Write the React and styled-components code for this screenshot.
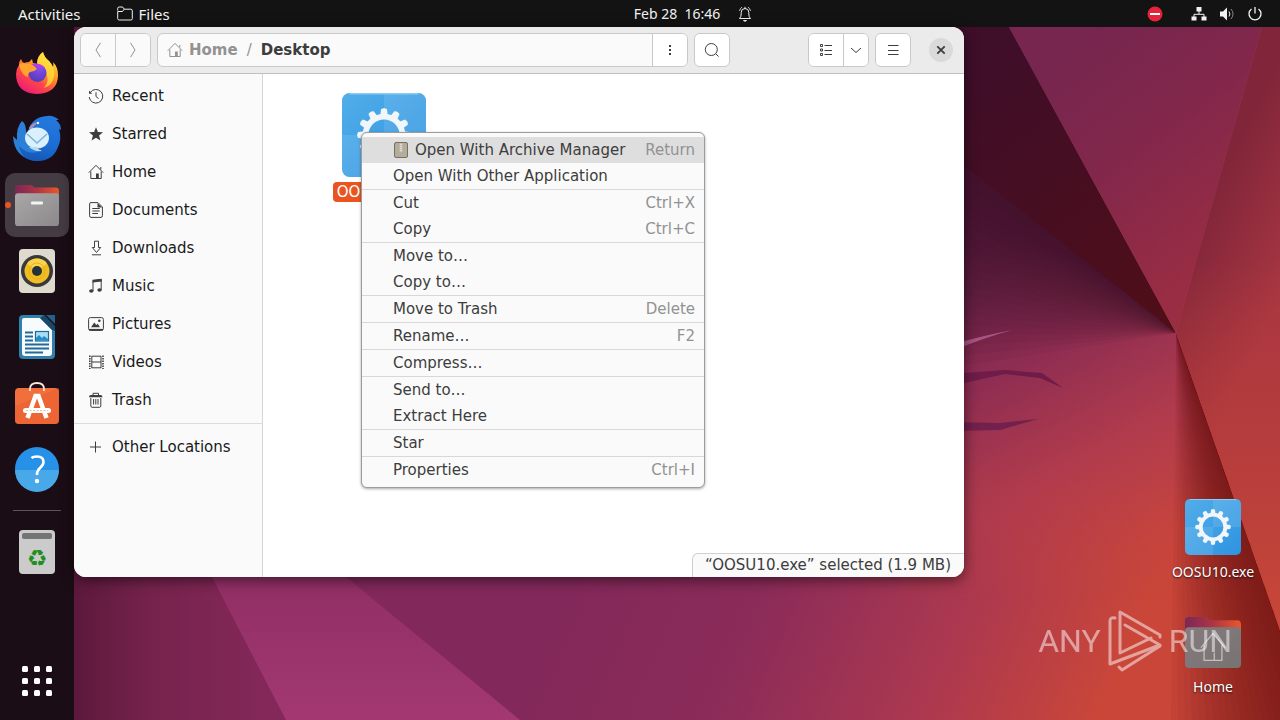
import React from "react";

import styled, { createGlobalStyle, css } from "styled-components";

const GlobalStyle = createGlobalStyle`
    * {
        box-sizing: border-box;
    }

    body {
        margin: 0;
        background: #7a2450;
        font-family: "DejaVu Sans", sans-serif;
        font-size: 15px;
    }

    button {
        margin: 0;
        padding: 0;
        border: 0;
        background: none;
        color: inherit;
        font: inherit;
        cursor: default;
    }

    svg {
        display: block;
        flex: none;
    }
`;

const Screen = styled.div`
    position: relative;
    display: flex;
    flex-direction: column;
    min-height: 100vh;
    overflow: hidden;
`;

const WallpaperSvg = styled.svg`
    position: absolute;
    inset: 0;
    width: 100%;
    height: 100%;
`;

/* top bar */

const TopBar = styled.header`
    position: relative;
    display: grid;
    grid-template-columns: 1fr auto 1fr;
    align-items: center;
    height: 27px;
    padding: 0 17px 0 18px;
    background: #131313;
    color: #f2f2f2;
    font-family: "Noto Sans", sans-serif;
    font-size: 14px;
    line-height: 20px;
`;

const BarGroup = styled.div`
    display: flex;
    align-items: center;
    gap: ${(props) => props.$gap || 0}px;
    justify-content: ${(props) => (props.$end ? "flex-end" : "flex-start")};
    font-size: 15px;
`;

const BarButton = styled.button`
    display: flex;
    align-items: center;
    gap: 6px;
    white-space: pre;
`;

const ClockButton = styled(BarButton)`
    gap: 17px;
    margin-left: 106px;
`;

const RecordButton = styled(BarButton)`
    margin-right: 16px;
`;

/* dock */

const Workspace = styled.div`
    position: relative;
    display: flex;
    flex: 1;
`;

const Dock = styled.nav`
    display: flex;
    flex-direction: column;
    align-items: center;
    gap: 2px;
    width: 74px;
    padding: 14px 5px 7px;
    background: rgba(20, 12, 18, 0.9);
`;

const DockItem = styled.button`
    position: relative;
    display: grid;
    place-items: center;
    width: 64px;
    height: 64px;
    border-radius: 10px;

    ${(props) =>
        props.$active &&
        css`
            background: #453c43;

            &::before {
                content: "";
                position: absolute;
                left: 0;
                top: 29px;
                width: 6px;
                height: 6px;
                border-radius: 50%;
                background: #e95420;
            }
        `}
`;

const DockLine = styled.hr`
    width: 48px;
    height: 1px;
    margin: 7px 0;
    border: 0;
    background: #5c545a;
`;

const DockSpacer = styled.div`
    flex: 1;
`;

/* window */

const Desktop = styled.main`
    position: relative;
    flex: 1;
`;

const Window = styled.section`
    position: absolute;
    top: 0;
    left: 0;
    display: flex;
    flex-direction: column;
    width: calc(100% - 316px);
    height: calc(100% - 143px);
    border-radius: 12px;
    background: #fff;
    box-shadow: 0 3px 14px rgba(0, 0, 0, 0.55);
`;

const HeaderBar = styled.div`
    display: flex;
    align-items: center;
    gap: 6px;
    height: 47px;
    padding: 0 11px 0 6px;
    border-bottom: 1px solid #bfbfbf;
    border-radius: 12px 12px 0 0;
    background: #ebebeb;
    color: #3d3d3d;
`;

const Linked = styled.div`
    display: flex;
    flex: ${(props) => (props.$grow ? 1 : "none")};
    height: 34px;
    margin-right: ${(props) => (props.$wide ? 72 : 0)}px;
    border: 1px solid #c9c9c9;
    border-radius: 6px;
    background: ${(props) => (props.$flat ? "#fafafa" : "#fff")};
    overflow: hidden;

    > * + button {
        border-left: 1px solid #c9c9c9;
    }
`;

const ToolButton = styled.button`
    display: grid;
    place-items: center;
    box-sizing: content-box;
    width: ${(props) => (props.$narrow ? 24 : 34)}px;
    color: ${(props) => (props.disabled ? "#929292" : "#3d3d3d")};
    background: ${(props) => (props.disabled ? "#fafafa" : "#fff")};
`;

const PathBar = styled.div`
    display: flex;
    flex: 1;
    align-items: center;
    gap: 9px;
    padding-left: 9px;
    color: #929292;
    font-weight: bold;
`;

const PathButton = styled.button`
    display: flex;
    align-items: center;
    gap: 6px;
    color: ${(props) => (props.$current ? "#3d3d3d" : "#929292")};
`;

const Slash = styled.span`
    font-weight: normal;
`;

const CloseButton = styled.button`
    display: grid;
    place-items: center;
    width: 24px;
    height: 24px;
    margin-left: 12px;
    border-radius: 50%;
    background: #dadada;
`;

const WindowBody = styled.div`
    display: flex;
    flex: 1;
`;

const Sidebar = styled.nav`
    width: 189px;
    padding-top: 3px;
    border-right: 1px solid #d6d6d6;
    border-bottom-left-radius: 12px;
    background: #fafafa;
`;

const Place = styled.button`
    display: flex;
    align-items: center;
    gap: 8px;
    width: 100%;
    height: 38px;
    padding-left: 14px;
    color: #1a1a1a;

    svg {
        color: #3d3d3d;
    }
`;

const SidebarLine = styled.hr`
    height: 1px;
    margin: 4px 0;
    border: 0;
    background: #dcdcdc;
`;

const Content = styled.div`
    display: flex;
    flex: 1;
    flex-direction: column;
    align-items: flex-start;
    justify-content: space-between;
    padding: 19px 0 0 71px;
`;

const FileTile = styled.button`
    display: flex;
    flex-direction: column;
    align-items: center;
    gap: 5px;
    width: 100px;
`;

const FileName = styled.span`
    padding: 0 4px;
    border-radius: 4px;
    background: #e95420;
    color: #fff;
    line-height: 20px;
`;

const StatusBar = styled.div`
    align-self: flex-end;
    height: 24px;
    padding: 0 13px 0 12px;
    border: 1px solid #d0d0d0;
    border-width: 1px 0 0 1px;
    border-radius: 6px 0 12px 0;
    background: #fafafa;
    color: #3d3d3d;
    line-height: 22px;
`;

/* context menu */

const Menu = styled.div`
    position: absolute;
    top: 105px;
    left: 287px;
    width: 344px;
    padding: 4px 0;
    border: 1px solid #9c9c9c;
    border-radius: 6px;
    background: #fafafa;
    box-shadow: 0 1px 3px rgba(0, 0, 0, 0.35);
`;

const MenuItem = styled.button`
    display: flex;
    align-items: center;
    gap: 6px;
    width: 100%;
    height: 26px;
    padding: 0 9px 0 31px;
    background: ${(props) => (props.$active ? "#dedede" : "none")};
    color: #3d3d3d;
`;

const Shortcut = styled.span`
    margin-left: auto;
    color: #929292;
`;

const MenuLine = styled.hr`
    height: 1px;
    margin: 0;
    border: 0;
    background: #d8d8d8;
`;

/* desktop icons and the watermark */

const DesktopIcons = styled.div`
    position: absolute;
    right: 17px;
    bottom: 23px;
    display: flex;
    flex-direction: column;
    gap: 32px;
    width: 100px;
`;

const DesktopIcon = styled.button`
    display: flex;
    flex-direction: column;
    align-items: center;
    gap: 7px;
    color: #fff;
    font-family: "Noto Sans", sans-serif;
    font-size: 14px;
    line-height: 20px;
    text-shadow: 0 1px 2px rgba(0, 0, 0, 0.7);
`;

const IconBox = styled.span`
    display: grid;
    place-items: center;
    height: 56px;
`;

const Watermark = styled.div`
    position: absolute;
    right: 48px;
    bottom: 48px;
    display: flex;
    align-items: center;
    gap: 6px;
    color: #fff;
    font-family: "Liberation Sans Narrow", Roboto, sans-serif;
    font-size: 32px;
    line-height: 62px;
    opacity: 0.5;
    pointer-events: none;
`;

const foldSteps = Array.from({ length: 20 }, (_, i) => i + 1);

function Wallpaper() {
    return (
        <WallpaperSvg viewBox="0 0 1280 720" preserveAspectRatio="none" aria-hidden="true">
            <defs>
                <linearGradient id="wBase" gradientUnits="userSpaceOnUse" x1="620" y1="420" x2="1130" y2="640">
                    <stop offset="0" stopColor="#82285a" />
                    <stop offset="0.35" stopColor="#8a2b59" />
                    <stop offset="0.7" stopColor="#ab3850" />
                    <stop offset="1" stopColor="#c94639" />
                </linearGradient>
                <linearGradient id="wMid" gradientUnits="userSpaceOnUse" x1="960" y1="260" x2="1120" y2="560">
                    <stop offset="0" stopColor="#6f234f" />
                    <stop offset="0.35" stopColor="#8e2d52" />
                    <stop offset="0.7" stopColor="#b23c4c" />
                    <stop offset="1" stopColor="#c4443f" />
                </linearGradient>
                <linearGradient id="wMidFade" gradientUnits="userSpaceOnUse" x1="0" y1="480" x2="0" y2="600">
                    <stop offset="0" stopColor="#fff" />
                    <stop offset="1" stopColor="#000" />
                </linearGradient>
                <mask id="wMidMask">
                    <rect width="1280" height="720" fill="url(#wMidFade)" />
                </mask>
                <linearGradient id="wWedge" gradientUnits="userSpaceOnUse" x1="980" y1="60" x2="1176" y2="333">
                    <stop offset="0" stopColor="#3f0e29" />
                    <stop offset="1" stopColor="#500e17" />
                </linearGradient>
                <linearGradient id="wTop" gradientUnits="userSpaceOnUse" x1="1050" y1="60" x2="1210" y2="270">
                    <stop offset="0" stopColor="#76264f" />
                    <stop offset="0.45" stopColor="#82274b" />
                    <stop offset="1" stopColor="#992d43" />
                </linearGradient>
                <linearGradient id="wRight" gradientUnits="userSpaceOnUse" x1="1200" y1="210" x2="1300" y2="260">
                    <stop offset="0" stopColor="#80253a" />
                    <stop offset="1" stopColor="#a83641" />
                </linearGradient>
                <linearGradient id="wRightLow" gradientUnits="userSpaceOnUse" x1="0" y1="260" x2="0" y2="620">
                    <stop offset="0" stopColor="#c04038" stopOpacity="0" />
                    <stop offset="1" stopColor="#c74738" />
                </linearGradient>
                <linearGradient id="wCorner" gradientUnits="userSpaceOnUse" x1="74" y1="0" x2="270" y2="0">
                    <stop offset="0" stopColor="#5c193b" />
                    <stop offset="0.4" stopColor="#76234d" />
                    <stop offset="1" stopColor="#842859" />
                </linearGradient>
                <linearGradient id="wLight" x1="0" y1="0" x2="0" y2="1">
                    <stop offset="0" stopColor="#902f64" />
                    <stop offset="1" stopColor="#a33873" />
                </linearGradient>
            </defs>
            <rect width="1280" height="720" fill="url(#wBase)" />
            <rect x="0" y="0" width="290" height="720" fill="url(#wCorner)" />
            <path d="M212 577 L286 720 H520 L346 577 Z" fill="url(#wLight)" />
            <path d="M900 100 L1176 333 L1280 628 L1280 720 H900 Z" fill="url(#wMid)" mask="url(#wMidMask)" />
            {/* soft folds that run out from the corner point */}
            {foldSteps.map((step) => (
                <path key={step} d={`M900 100 L1176 333 L900 ${115 + step * 13} Z`} fill="#300c24" opacity="0.055" />
            ))}
            {foldSteps.map((step) => (
                <path key={step} d={`M1176 333 L${1311 - step * 7} 720 H1311 Z`} fill="#6e1215" opacity="0.06" />
            ))}
            <path d="M900 27 H1009 L1176 333 L967 168 L900 115 Z" fill="url(#wWedge)" />
            <path d="M1009 27 H1262 L1176 333 Z" fill="url(#wTop)" />
            <path d="M1262 27 H1280 V628 L1176 333 Z" fill="url(#wRight)" />
            <path d="M1262 27 H1280 V628 L1176 333 Z" fill="url(#wRightLow)" />
            <path d="M950 345 Q985 335 1013 330 Q985 337 950 352 Z" fill="#a65683" />
            <path d="M950 374 L1005 370 L1042 373 L1063 388 L1040 378 L1005 374 L950 386 Z" fill="#6f1c4a" />
            <path d="M950 422 L1000 423 L1038 419 L1000 430 L950 431 Z" fill="#72204d" />
        </WallpaperSvg>
    );
}

/* 16px symbolic icons, drawn with the current colour */
const glyphs = {
    folder: (
        <path d="M.7 4.5 V2.5 Q.7 1 2.2 1 H5 Q6 1 6.5 2 L7.2 3.2 H13.8 Q15.3 3.2 15.3 4.7 V12.5 Q15.3 14 13.8 14 H2.2 Q.7 14 .7 12.5 V5.5 H5.5 L7.2 3.2" />
    ),
    bell: (
        <>
            <path d="M2.5 12.5 Q4.2 11 4.2 8 V6.5 Q4.2 2.5 8 2.5 T11.8 6.5 V8 Q11.8 11 13.5 12.5 Z M8 .8 V2.5" />
            <path d="M2.5 5 Q3 2.5 5 1 M13.5 5 Q13 2.5 11 1" strokeWidth="0.8" />
            <path d="M6 14 H10 Q9.5 15.8 8 15.8 T6 14 Z" fill="currentColor" stroke="none" />
        </>
    ),
    network: (
        <>
            <path d="M8 5 V8 M3 11 V8.3 H13 V11" />
            <path d="M5.5 1 H10.5 V5.5 H5.5 Z M.5 10.5 H5.5 V14.5 H.5 Z M10.5 10.5 H15.5 V14.5 H10.5 Z" fill="currentColor" stroke="none" />
        </>
    ),
    volume: (
        <>
            <path d="M1 5.5 H4 L8 1.5 V14.5 L4 10.5 H1 Z" fill="currentColor" stroke="none" />
            <path d="M10 5.5 Q11.8 8 10 10.5" />
            <path d="M12 3 Q16 8 12 13" opacity="0.5" />
        </>
    ),
    power: <path d="M8 1 V7.5 M4.5 3 A6 6 0 1 0 11.5 3" strokeWidth="1.3" />,
    back: <path d="M10.5 .8 L6 8 L10.5 15.2" />,
    forward: <path d="M5.5 .8 L10 8 L5.5 15.2" />,
    home: (
        <>
            <path d="M.8 8.7 L8 1.3 L15.2 8.7 M2.8 7.5 V14.5 H13.2 V7.5 M12.8 3 V5.5" />
            <path d="M8 9.5 H10.8 V14.5 H8 Z" fill="currentColor" stroke="none" />
        </>
    ),
    recent: (
        <>
            <path d="M2.3 4.5 A6.8 6.8 0 1 1 1.2 9 M8 4.3 V8.5 L10.5 10.5" />
            <path d="M1 2.5 V5.7 H4.2 Z" fill="currentColor" stroke="none" />
        </>
    ),
    star: (
        <path d="M8 1.3 L9.9 6 L15 6.3 L11.1 9.5 L12.4 14.4 L8 11.7 L3.6 14.4 L4.9 9.5 L1 6.3 L6.1 6 Z" fill="currentColor" stroke="none" />
    ),
    document: (
        <>
            <path d="M1.6 1.9 Q1.6 .6 3 .6 H10 L14.4 5 V13.8 Q14.4 15.4 13 15.4 H3 Q1.6 15.4 1.6 13.8 Z M4.3 6.5 H11.7 M4.3 9 H11.7 M4.3 11.5 H10" />
            <path d="M9.5 1 V5.5 H14 Z" fill="currentColor" stroke="none" />
        </>
    ),
    download: <path d="M6.5 1.2 H10.5 V7.5 H12.7 L8.5 12.5 L4.3 7.5 H6.5 Z M4 14.8 H13" />,
    music: (
        <>
            <path d="M5 13 V2.8 L13.2 1.5 V12" />
            <path d="M4.5 1.8 L13.7 .8 V3.5 L4.5 4.5 Z" fill="currentColor" stroke="none" />
            <ellipse cx="3.3" cy="13" rx="2.2" ry="1.8" fill="currentColor" stroke="none" />
            <ellipse cx="11.5" cy="12" rx="2.2" ry="1.8" fill="currentColor" stroke="none" />
        </>
    ),
    picture: (
        <>
            <rect x=".6" y="1.600" width="14.800" height="12.800" rx="1.800" />
            <path d="M1 13.7 H15" strokeWidth="1.6" />
            <path d="M3 11.3 L6.3 6.5 L8.3 9 L9.8 7.8 L12 11.3 Z" fill="currentColor" stroke="none" />
            <circle cx="11.3" cy="4.8" r="1.3" fill="currentColor" stroke="none" />
        </>
    ),
    video: (
        <>
            <path d="M3.8 2 V14 M13 2 V14 M3.8 2.2 H13 M3.8 8 H13 M3.8 13.8 H13" />
            <path d="M1.8 1.5 V15 M15 1.5 V15" strokeWidth="1.6" strokeDasharray="1.5 1" />
        </>
    ),
    trash: (
        <>
            <path d="M5 3 V1.3 H10.5 V3 M2.8 6 V13.8 Q2.8 15.3 4.2 15.3 H11.5 Q12.8 15.3 12.8 13.8 V6 M5.6 7 V12.5 M7.8 7 V12.5 M10 7 V12.5" />
            <path d="M1 5.3 Q1 3 3 3 H12.5 Q14.5 3 14.5 5.3 Z" fill="currentColor" stroke="none" />
        </>
    ),
    plus: <path d="M7.5 2.5 V13.5 M2 8 H13" />,
    dots: <path d="M7 3 H9 V5 H7 Z M7 7 H9 V9 H7 Z M7 11 H9 V13 H7 Z" fill="currentColor" stroke="none" />,
    search: <path d="M13.3 7.5 A6 6 0 1 1 1.3 7.5 A6 6 0 1 1 13.3 7.5 M11.7 11.7 L14.6 14.6" />,
    list: <path d="M2.5 2.5 H4.5 V4.5 H2.5 Z M2.5 7 H4.5 V9 H2.5 Z M2.5 11.5 H4.5 V13.5 H2.5 Z M6.5 3.5 H14 M6.5 8.5 H14 M6.5 12.5 H14" />,
    down: <path d="M3 6 L8 10.5 L13 6" />,
    burger: <path d="M3 3.5 H13.5 M3 8.5 H13.5 M3 12.5 H13.5" />,
    close: <path d="M4.3 4.3 L11.7 11.7 M11.7 4.3 L4.3 11.7" strokeWidth="1.8" />,
};

function Glyph({ name }) {
    return (
        <svg width="16" height="16" viewBox="0 0 16 16" fill="none" stroke="currentColor" aria-hidden="true">
            {glyphs[name]}
        </svg>
    );
}

const teeth = [0, 30, 60, 90, 120, 150, 180, 210, 240, 270, 300, 330];

function ExeIcon({ size }) {
    return (
        <svg width={size} height={size} viewBox="0 0 56 56" aria-hidden="true">
            <defs>
                <linearGradient id={`exe${size}`} x1="0" y1="0" x2="1" y2="1">
                    <stop offset="0" stopColor="#52aee9" />
                    <stop offset="1" stopColor="#2d93e2" />
                </linearGradient>
            </defs>
            <rect width="56" height="56" rx="5" fill={`url(#exe${size})`} />
            <path d="M28 0 H51 Q56 0 56 5 V28 H28 Z M28 28 V56 H5 Q0 56 0 51 V28 Z" fill="#fff" opacity="0.1" />
            <path d="M5 .5 H51" stroke="#8ccbf2" />
            <g fill="#f1f6fb">
                {teeth.map((angle) => (
                    <path key={angle} d="M25.5 15 L26 10.8 Q28 9.4 30 10.8 L30.5 15 Z" transform={`rotate(${angle} 28 28)`} />
                ))}
            </g>
            <circle cx="28" cy="28" r="12.300" fill="none" stroke="#f1f6fb" strokeWidth="3.800" />
        </svg>
    );
}

function FolderIcon({ width, height, home }) {
    const id = home ? "folderHome" : "folderDock";
    return (
        <svg width={width} height={height} viewBox="0 0 44 40" preserveAspectRatio="none" aria-hidden="true">
            <defs>
                <linearGradient id={`${id}Back`} x1="0" y1="0" x2="1" y2="0">
                    <stop offset="0" stopColor="#7a2757" />
                    <stop offset="0.5" stopColor="#ad3544" />
                    <stop offset="1" stopColor="#e8582a" />
                </linearGradient>
                <linearGradient id={id} x1="0" y1="0" x2="1" y2="1">
                    <stop offset="0" stopColor={home ? "#867a7c" : "#a9a7a8"} />
                    <stop offset="1" stopColor={home ? "#777373" : "#8b898a"} />
                </linearGradient>
            </defs>
            <path d="M0 3 Q0 0 3 0 H15 Q17 0 18 1 L19.500 2.500 H41 Q44 2.500 44 6 V20 H0 Z" fill={`url(#${id}Back)`} />
            <rect y="8" width="44" height="32" rx="3" fill={`url(#${id})`} />
            {home ? (
                <path d="M12.500 24 L22 13 L31.500 24 M15 22 V34 H29 V22 M23 28 V34" fill="none" stroke="#c5bfc0" />
            ) : (
                <rect x="16" y="16" width="12" height="3" rx="1" fill="#f4f4f4" />
            )}
        </svg>
    );
}

function Firefox() {
    return (
        <svg width="44" height="46" viewBox="0 0 44 46" aria-hidden="true">
            <defs>
                <linearGradient id="foxBody" x1="0.85" y1="0.1" x2="0.25" y2="1">
                    <stop offset="0" stopColor="#ffe640" />
                    <stop offset="0.35" stopColor="#ff9a22" />
                    <stop offset="0.65" stopColor="#ff4548" />
                    <stop offset="1" stopColor="#ec1a78" />
                </linearGradient>
                <radialGradient id="foxGlobe" cx="0.6" cy="0.2" r="0.9">
                    <stop offset="0" stopColor="#8d4bf0" />
                    <stop offset="1" stopColor="#4a3bb8" />
                </radialGradient>
            </defs>
            <path
                d="M4 15 Q4 11 6 9 Q7 12 9 13 Q12 12 14 12 L17 9 L18 13 L22 14 Q22 6 28 2 Q29 7 34 11 Q36 13 38 17 Q39 14 38 12 Q43 17 43 25 Q43 43 22 44 Q1 43 1 24 Q1 19 4 15 Z"
                fill="url(#foxBody)"
            />
            <path d="M28 2 Q29 7 34 11 Q40 17 39 26 Q38 35 29 38 Q35 31 31 23 Q24 18 22 14 Q22 6 28 2 Z" fill="#ffe13d" opacity="0.75" />
            <circle cx="22.500" cy="23" r="9" fill="url(#foxGlobe)" />
            <path d="M4 15 Q5 13 8 13 Q10 14 14 14 Q18 14 22 19 Q19 22 15 22 Q12 24 13 27 Q7 26 4 15 Z" fill="#ffa52b" />
            <path d="M16 14 Q25 12 30 18 Q27 17 24 17 Q20 17 16 14 Z" fill="#b83be8" />
        </svg>
    );
}

function Thunderbird() {
    return (
        <svg width="50" height="48" viewBox="0 0 50 48" aria-hidden="true">
            <defs>
                <linearGradient id="birdBody" x1="0.6" y1="0" x2="0.4" y2="1">
                    <stop offset="0" stopColor="#2579dc" />
                    <stop offset="0.6" stopColor="#1b6dd3" />
                    <stop offset="1" stopColor="#1557b8" />
                </linearGradient>
            </defs>
            <path d="M10 6 Q15 9 14 21 L19 33 L40 38 Q33 46 24 46 Q2 43 1 21 L5 25 Q4 12 10 6 Z" fill="#2a7fd8" />
            <path
                d="M16 16 Q20 2 35 1 Q41 0 47 5 L44 5 Q49 9 49 15 L47 14 Q50 24 46 32 Q41 46 25 46 Q10 46 7 31 Q16 40 25 37 Q34 34 16 16 Z"
                fill="url(#birdBody)"
            />
            <path d="M17 13 Q20 7 27 7 Q22 10 19 16 Z" fill="#a98fb8" />
            <circle cx="26" cy="8" r="1.200" fill="#eaf5ff" />
            <ellipse cx="25" cy="23" rx="12" ry="10.500" fill="#daf0fd" />
            <path d="M15 19 L25 28 L35 19" fill="none" stroke="#7cb4dd" strokeWidth="1.500" />
            <path d="M17 32 Q22 37 30 36 Q26 34 25 32 Z" fill="#b6dbf5" />
        </svg>
    );
}

function Rhythmbox() {
    return (
        <svg width="38" height="46" viewBox="0 0 38 46" aria-hidden="true">
            <rect x="1" y="1" width="36" height="44" rx="4" fill="#dfdace" />
            <circle cx="19" cy="23" r="16" fill="#39393b" />
            <circle cx="19" cy="23" r="12.500" fill="#f0bd23" />
            <path d="M19 23 L9 15.500 A12.500 12.500 0 0 1 29 15.500 Z" fill="#fbd34c" />
            <circle cx="19" cy="23" r="5" fill="#263238" />
            <circle cx="19" cy="23" r="8" fill="none" stroke="#e0ab1a" strokeWidth="0.800" />
        </svg>
    );
}

function Writer() {
    return (
        <svg width="38" height="46" viewBox="0 0 38 46" aria-hidden="true">
            <path d="M5 1 H26 L37 13 V41 Q37 45 33 45 H5 Q1 45 1 41 V5 Q1 1 5 1 Z" fill="#2f80ad" />
            <path d="M28 1 H37 V10 Z" fill="#21618a" />
            <path d="M6 4 H22 L34 16 V39 Q34 42 31 42 H7 Q4 42 4 39 V6 Q4 4 6 4 Z" fill="#f7fbfe" />
            <path d="M22 4 L34 16 L37 17 V12 L26 1 Z" fill="#174968" />
            <path d="M7 18.500 H15 M7 22.500 H15 M7 26.500 H15 M7 30.500 H31 M7 34.500 H31 M7 38.500 H25" stroke="#226a97" strokeWidth="1.800" />
            <rect x="17.500" y="17.500" width="13" height="9.500" fill="#a7dcf5" stroke="#226a97" strokeWidth="1.200" />
            <path d="M18 26.500 V24 L21 21 L24 24 L26 22 L30 25 V26.500 Z" fill="#238dc8" />
        </svg>
    );
}

function Software() {
    return (
        <svg width="44" height="50" viewBox="0 0 44 50" aria-hidden="true">
            <rect y="10" width="44" height="36" rx="4" fill="#f06f3c" />
            <path d="M0 28 L44 10 V42 Q44 46 40 46 H4 Q0 46 0 42 Z" fill="#e95c2b" opacity="0.5" />
            <path d="M15 13 V11 Q15 5 22 5 T29 11 V13" fill="none" stroke="#fbe7d9" strokeWidth="1.800" />
            <path d="M12.500 40 L20.500 18 H23.500 L31.500 40" fill="none" stroke="#fff" strokeWidth="4.500" />
            <rect x="8" y="30" width="28" height="5" rx="2.500" fill="#fff" />
            <path d="M11 32.500 H33" stroke="#f1a787" strokeWidth="0.800" strokeDasharray="2 1.500" />
        </svg>
    );
}

function Help() {
    return (
        <svg width="46" height="46" viewBox="0 0 46 46" aria-hidden="true">
            <circle cx="23" cy="23" r="22" fill="#2691e6" />
            <path d="M1 24 A22 22 0 0 0 45 24 Z" fill="#49a9e8" />
            <path d="M17.500 12 Q19 10.500 23 10.500 Q29.500 10.500 29.500 16 Q29.500 19 26 22 Q23 24.500 23 29" fill="none" stroke="#fff" strokeWidth="2.600" />
            <circle cx="23" cy="35" r="2.200" fill="#fff" />
        </svg>
    );
}

function Trash() {
    return (
        <svg width="38" height="46" viewBox="0 0 38 46" aria-hidden="true">
            <rect x="1" y="1" width="36" height="44" rx="4" fill="#cbcbcb" />
            <rect x="4" y="4" width="30" height="6" rx="2" fill="#747474" />
            <text x="19" y="37" textAnchor="middle" fontFamily="DejaVu Sans, sans-serif" fontSize="23" fill="#1f8f22">♻</text>
        </svg>
    );
}

function AppGrid() {
    return (
        <svg width="30" height="30" viewBox="0 0 30 30" fill="#fff" aria-hidden="true">
            {[0, 12, 24].map((y) =>
                [0, 12, 24].map((x) => <rect key={`${x}-${y}`} x={x} y={y} width="6" height="6" rx="1.500" />)
            )}
        </svg>
    );
}

function ArchiveIcon() {
    return (
        <svg width="16" height="16" viewBox="0 0 16 16" aria-hidden="true">
            <rect x="1.500" y=".5" width="13" height="15" rx="1.500" fill="#b5ad9c" stroke="#77705f" />
            <rect x="6.500" y="1" width="3" height="9" fill="#c6bfb0" />
            <path d="M8 2 V10" stroke="#eeeae0" strokeWidth="1.500" strokeDasharray="1 1" />
        </svg>
    );
}

const places = [
    ["recent", "Recent"],
    ["star", "Starred"],
    ["home", "Home"],
    ["document", "Documents"],
    ["download", "Downloads"],
    ["music", "Music"],
    ["picture", "Pictures"],
    ["video", "Videos"],
    ["trash", "Trash"],
];

const menuGroups = [
    [["Open With Archive Manager", "Return"], ["Open With Other Application"]],
    [["Cut", "Ctrl+X"], ["Copy", "Ctrl+C"]],
    [["Move to…"], ["Copy to…"]],
    [["Move to Trash", "Delete"]],
    [["Rename…", "F2"]],
    [["Compress…"]],
    [["Send to…"], ["Extract Here"]],
    [["Star"]],
    [["Properties", "Ctrl+I"]],
];

function ContextMenu() {
    return (
        <Menu role="menu">
            {menuGroups.map((group, index) => (
                <React.Fragment key={group[0][0]}>
                    {index > 0 && <MenuLine />}
                    {group.map(([label, shortcut]) => {
                        const first = label === "Open With Archive Manager";
                        return (
                            <MenuItem key={label} role="menuitem" $active={first}>
                                {first && <ArchiveIcon />}
                                <span>{label}</span>
                                {shortcut && <Shortcut>{shortcut}</Shortcut>}
                            </MenuItem>
                        );
                    })}
                </React.Fragment>
            ))}
        </Menu>
    );
}

function FilesWindow() {
    return (
        <Window aria-label="Files">
            <HeaderBar>
                <Linked>
                    <ToolButton disabled aria-label="Back"><Glyph name="back" /></ToolButton>
                    <ToolButton disabled aria-label="Forward"><Glyph name="forward" /></ToolButton>
                </Linked>
                <Linked $grow $flat>
                    <PathBar>
                        <PathButton><Glyph name="home" />Home</PathButton>
                        <Slash>/</Slash>
                        <PathButton $current>Desktop</PathButton>
                    </PathBar>
                    <ToolButton aria-label="Folder menu"><Glyph name="dots" /></ToolButton>
                </Linked>
                <Linked $wide>
                    <ToolButton aria-label="Search"><Glyph name="search" /></ToolButton>
                </Linked>
                <Linked>
                    <ToolButton aria-label="List view"><Glyph name="list" /></ToolButton>
                    <ToolButton $narrow aria-label="View options"><Glyph name="down" /></ToolButton>
                </Linked>
                <Linked>
                    <ToolButton aria-label="Main menu"><Glyph name="burger" /></ToolButton>
                </Linked>
                <CloseButton aria-label="Close"><Glyph name="close" /></CloseButton>
            </HeaderBar>
            <WindowBody>
                <Sidebar>
                    {places.map(([icon, label]) => (
                        <Place key={label}><Glyph name={icon} />{label}</Place>
                    ))}
                    <SidebarLine />
                    <Place><Glyph name="plus" />Other Locations</Place>
                </Sidebar>
                <Content>
                    <FileTile>
                        <ExeIcon size={84} />
                        <FileName>OOSU10.exe</FileName>
                    </FileTile>
                    <StatusBar>“OOSU10.exe” selected (1.9 MB)</StatusBar>
                </Content>
            </WindowBody>
            <ContextMenu />
        </Window>
    );
}

function App() {
    return (
        <Screen>
            <GlobalStyle />
            <Wallpaper />
            <TopBar>
                <BarGroup $gap={36}>
                    <BarButton>Activities</BarButton>
                    <BarButton><Glyph name="folder" />Files</BarButton>
                </BarGroup>
                <ClockButton>Feb 28  16:46<Glyph name="bell" /></ClockButton>
                <BarGroup $gap={12} $end>
                    <RecordButton aria-label="Do not disturb">
                        <svg width="16" height="16" viewBox="0 0 16 16">
                            <circle cx="8" cy="8" r="7.500" fill="#e5243b" />
                            <path d="M3 8 H13" stroke="#fff" strokeWidth="2" />
                        </svg>
                    </RecordButton>
                    <BarButton aria-label="Network"><Glyph name="network" /></BarButton>
                    <BarButton aria-label="Volume"><Glyph name="volume" /></BarButton>
                    <BarButton aria-label="Power"><Glyph name="power" /></BarButton>
                </BarGroup>
            </TopBar>
            <Workspace>
                <Dock>
                    <DockItem aria-label="Firefox"><Firefox /></DockItem>
                    <DockItem aria-label="Thunderbird"><Thunderbird /></DockItem>
                    <DockItem $active aria-label="Files"><FolderIcon width={44} height={41} /></DockItem>
                    <DockItem aria-label="Rhythmbox"><Rhythmbox /></DockItem>
                    <DockItem aria-label="Writer"><Writer /></DockItem>
                    <DockItem aria-label="Software"><Software /></DockItem>
                    <DockItem aria-label="Help"><Help /></DockItem>
                    <DockLine />
                    <DockItem aria-label="Trash"><Trash /></DockItem>
                    <DockSpacer />
                    <DockItem aria-label="Show applications"><AppGrid /></DockItem>
                </Dock>
                <Desktop>
                    <DesktopIcons>
                        <DesktopIcon>
                            <IconBox><ExeIcon size={56} /></IconBox>
                            OOSU10.exe
                        </DesktopIcon>
                        <DesktopIcon>
                            <IconBox><FolderIcon width={56} height={51} home /></IconBox>
                            Home
                        </DesktopIcon>
                    </DesktopIcons>
                    <Watermark>
                        <span>ANY</span>
                        <svg width="56" height="62" viewBox="-1 0 56 62" fill="none" stroke="#fff" strokeWidth="3" strokeLinejoin="round" strokeLinecap="round" aria-hidden="true">
                            <path d="M7 8 Q2 7 2 11 V54 L52 35 L17 15" />
                            <path d="M52 27 V25 L12 2 V43 L43 28" />
                            <path d="M11 57 L14 60 L52 36" />
                        </svg>
                        <span>RUN</span>
                    </Watermark>
                    <FilesWindow />
                </Desktop>
            </Workspace>
        </Screen>
    );
}

export default App;
